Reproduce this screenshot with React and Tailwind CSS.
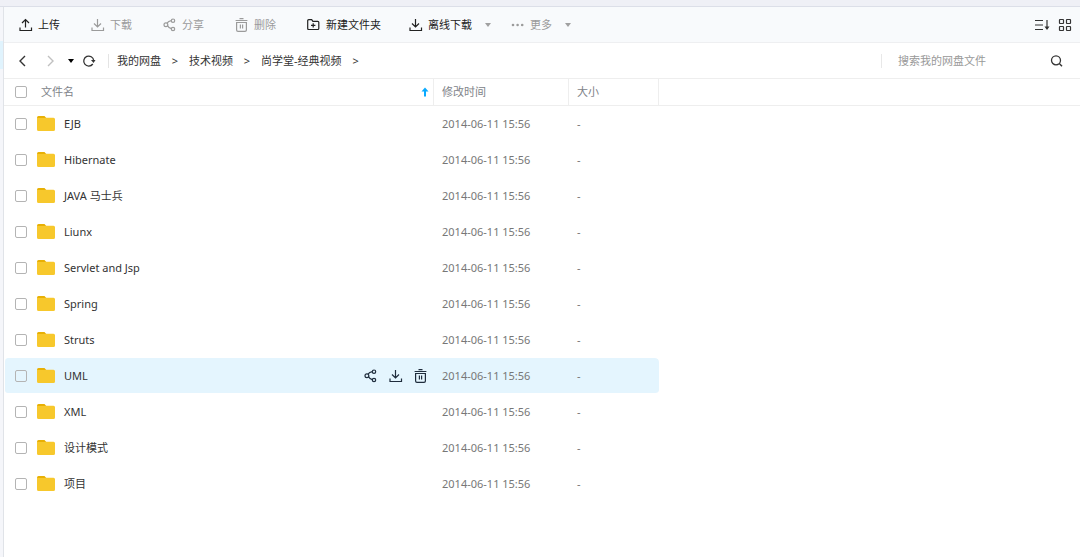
import React from "react";

const FOLDERS = [
  "EJB",
  "Hibernate",
  "JAVA 马士兵",
  "Liunx",
  "Servlet and Jsp",
  "Spring",
  "Struts",
  "UML",
  "XML",
  "设计模式",
  "项目",
];
const ACTIVE = "UML";
const MODIFIED = "2014-06-11 15:56";

function Icon({ children, className = "size-3.5" }) {
  return (
    <svg
      viewBox="0 0 14 14"
      fill="none"
      stroke="currentColor"
      strokeWidth="1.2"
      className={`shrink-0 ${className}`}
      aria-hidden="true"
    >
      {children}
    </svg>
  );
}

const UploadIcon = () => (
  <Icon>
    <path d="M6.5 9.5V2M3 5l3.5-3.5L10 5M1 9.5v3h11.5v-3" />
  </Icon>
);

const DownloadIcon = () => (
  <Icon>
    <path d="M6.5 1v8M3 5.5L6.5 9 10 5.5M1 9.5v3h11.5v-3" />
  </Icon>
);

const ShareIcon = () => (
  <Icon>
    <circle cx="2.9" cy="6.8" r="1.9" />
    <circle cx="10" cy="2.7" r="1.7" />
    <circle cx="10" cy="11" r="1.7" />
    <path d="M4 5.200Q5.400 3.100 8.300 2.700M4.600 7.700Q5.600 9.800 8.300 10.600" />
  </Icon>
);

const TrashIcon = () => (
  <Icon>
    <path d="M4.5 .6h4M.6 2.5h11.8M1.6 4.5h9.8v7.4q0 1.4-1.4 1.4H3q-1.4 0-1.4-1.4zM5.4 6.6v4M7.6 6.6v4" />
  </Icon>
);

const NewFolderIcon = () => (
  <Icon>
    <path d="M.7 2.7q0-1 1-1h3l1.2 1.6h4.9q1 0 1 1v6.2q0 1-1 1H1.7q-1 0-1-1zM6.2 5.2v4.4M4 7.4h4.4" />
  </Icon>
);

const MoreIcon = () => (
  <Icon>
    <g fill="currentColor" stroke="none">
      <circle cx="2" cy="7" r="1.3" />
      <circle cx="6.6" cy="7" r="1.3" />
      <circle cx="11.2" cy="7" r="1.3" />
    </g>
  </Icon>
);

const Caret = ({ className = "" }) => (
  <svg viewBox="0 0 6 4" className={`h-1 w-1.5 shrink-0 ${className}`} fill="currentColor" aria-hidden="true">
    <path d="M0 0h6L3 4z" />
  </svg>
);

const FolderIcon = () => (
  <svg viewBox="0 0 18 16" className="h-4 w-[18px] shrink-0" aria-hidden="true">
    <path d="M0 4V1.500Q0 0 1.500 0h6L9.300 2V4z" fill="#e8b004" />
    <path d="M0 2h8.300L9.500 1.700H16.500q1.500 0 1.500 1.500V13.500q0 1.500-1.500 1.500h-15Q0 15 0 13.500z" fill="#f7c82c" />
  </svg>
);

function ToolButton({ icon, children, muted, caret }) {
  return (
    <button
      type="button"
      className={`flex min-w-11 shrink-0 items-center gap-[5px] whitespace-nowrap ${muted ? "text-[#9b9b9b]" : "text-[#222222]"}`}
    >
      {icon}
      <span>{children}</span>
      {caret && <Caret className="ml-2 text-[#a0a0a0]" />}
    </button>
  );
}

function Check({ label }) {
  return (
    <input
      type="checkbox"
      aria-label={label}
      className="size-3 shrink-0 appearance-none rounded-[2px] border border-[#b4b4b4] checked:bg-[#09aaff]"
    />
  );
}

function Toolbar() {
  return (
    <div className="flex h-9 items-center border-b border-[#eeeff1] bg-[#f8fafc] pr-2 pl-[15px]">
      <div className="flex items-center gap-7">
        <ToolButton icon={<UploadIcon />}>上传</ToolButton>
        <ToolButton icon={<DownloadIcon />} muted>下载</ToolButton>
        <ToolButton icon={<ShareIcon />} muted>分享</ToolButton>
        <ToolButton icon={<TrashIcon />} muted>删除</ToolButton>
        <ToolButton icon={<NewFolderIcon />}>新建文件夹</ToolButton>
        <div className="flex gap-5">
          <ToolButton icon={<DownloadIcon />} caret>离线下载</ToolButton>
          <ToolButton icon={<MoreIcon />} muted caret>更多</ToolButton>
        </div>
      </div>
      <div className="ml-auto flex items-center gap-2 text-[#333333]">
        <button type="button" aria-label="排序">
          <svg viewBox="0 0 16 14" className="h-3.5 w-4" fill="none" stroke="currentColor" strokeWidth="1.2" aria-hidden="true">
            <path d="M1 2.500h8M1 7h8M1 11.500h8M13 2v9" />
            <path d="M10.500 8.500h5L13 12z" fill="currentColor" stroke="none" />
          </svg>
        </button>
        <button type="button" aria-label="网格视图">
          <Icon>
            <rect x="1.500" y="1.500" width="4" height="4" rx=".5" />
            <rect x="8.500" y="1.500" width="4" height="4" rx=".5" />
            <rect x="1.500" y="8.500" width="4" height="4" rx=".5" />
            <rect x="8.500" y="8.500" width="4" height="4" rx=".5" />
          </Icon>
        </button>
      </div>
    </div>
  );
}

function Navigation() {
  return (
    <div className="flex h-9 items-center border-b border-[#eeeeee] pr-4 pl-3">
      <button type="button" aria-label="后退" className="text-[#333333]">
        <Icon><path d="M9 2L4 7l5 5" strokeWidth="1.4" /></Icon>
      </button>
      <button type="button" aria-label="前进" className="ml-3.5 text-[#c0c0c0]">
        <Icon><path d="M4 2l5 5-5 5" strokeWidth="1.4" /></Icon>
      </button>
      <button type="button" aria-label="历史记录" className="ml-2.5 text-black">
        <Caret />
      </button>
      <button type="button" aria-label="刷新" className="ml-2 text-[#333333]">
        <Icon>
          <path d="M10.800 10A5 5 0 1 1 11.700 6.500" strokeWidth="1.300" />
          <path d="M9 6h4.500l-2 3z" fill="currentColor" stroke="none" />
        </Icon>
      </button>
      <nav aria-label="路径" className="ml-3 flex items-center whitespace-nowrap text-[#333333]">
        <span className="h-3.5 w-px bg-[#e4e4e4]" />
        <a href="#disk" className="ml-2">我的网盘</a>
        <span className="w-7 text-center">&gt;</span>
        <a href="#tech">技术视频</a>
        <span className="w-7 text-center">&gt;</span>
        <a href="#classic">尚学堂-经典视频</a>
        <span className="w-7 text-center">&gt;</span>
      </nav>
      <div className="ml-auto flex w-[183px] items-center border-l border-[#e8e8e8] pl-4">
        <input
          type="search"
          aria-label="搜索"
          placeholder="搜索我的网盘文件"
          className="h-3.5 min-w-0 flex-1 bg-transparent outline-none placeholder:text-[#999999]"
        />
        <button type="button" aria-label="搜索" className="text-[#333333]">
          <Icon>
            <circle cx="6" cy="6.300" r="4.500" strokeWidth="1.300" />
            <path d="M9.300 9.600l2.700 2.700" strokeWidth="1.400" />
          </Icon>
        </button>
      </div>
    </div>
  );
}

function FileRow({ name }) {
  const active = name === ACTIVE;
  const fill = active ? "bg-[#e4f5fe]" : "";
  return (
    <tr className="h-9">
      <td className={`rounded-l-sm border-b border-l border-transparent bg-clip-padding p-0 pl-2.5 ${fill}`}>
        <div className="flex items-center">
          <Check label={name} />
          <span className="ml-2.5 flex"><FolderIcon /></span>
          <span className="ml-[9px] text-[#333333]">{name}</span>
          {active && (
            <span className="mr-1.5 ml-auto flex gap-[11px] text-[#1f2d3d]">
              <button type="button" aria-label="分享"><ShareIcon /></button>
              <button type="button" aria-label="下载"><DownloadIcon /></button>
              <button type="button" aria-label="删除"><TrashIcon /></button>
            </span>
          )}
        </div>
      </td>
      <td className={`border-b border-transparent bg-clip-padding p-0 pl-2 text-[#777777] ${fill}`}>{MODIFIED}</td>
      <td className={`rounded-r-sm border-b border-transparent bg-clip-padding p-0 pl-2 text-[#777777] ${fill}`}>-</td>
      <td className="p-0" />
    </tr>
  );
}

function FileTable() {
  return (
    <table className="w-full table-fixed border-separate border-spacing-0 text-left">
      <colgroup>
        <col className="w-[430px]" />
        <col className="w-[135px]" />
        <col className="w-[90px]" />
        <col />
      </colgroup>
      <thead>
        <tr className="h-[27px] text-[#808389]">
          <th className="border-r border-b border-[#eeeeee] p-0 pl-[11px] font-normal">
            <div className="flex items-center">
              <Check label="全选" />
              <span className="ml-3.5">文件名</span>
              <svg viewBox="0 0 8 10" className="mr-1 ml-auto h-2.5 w-2" fill="#09aaff" aria-hidden="true">
                <path d="M4 .5L7.500 4.500H5V9.500H3V4.500H.5z" />
              </svg>
            </div>
          </th>
          <th className="border-r border-b border-[#eeeeee] p-0 pl-2 font-normal">修改时间</th>
          <th className="border-r border-b border-[#eeeeee] p-0 pl-2 font-normal">大小</th>
          <td className="border-b border-[#eeeeee] p-0" />
        </tr>
      </thead>
      <tbody>
        {FOLDERS.map((name) => (
          <FileRow key={name} name={name} />
        ))}
      </tbody>
    </table>
  );
}

export default function App() {
  return (
    <div className="flex min-h-screen flex-col bg-white font-['Noto_Sans','Noto_Sans_CJK_SC',sans-serif] text-[11px] leading-4">
      <div className="h-[7px] border-b border-[#dcdfe8] bg-[#eff0f6]" />
      <div className="flex flex-1">
        <aside className="w-1 shrink-0 border-r border-[#e0e3e8] bg-[#f5f6fa] pt-[34px]">
          <div className="h-7 bg-[#e0f3fd]" />
        </aside>
        <main className="min-w-0 flex-1">
          <Toolbar />
          <Navigation />
          <FileTable />
        </main>
      </div>
    </div>
  );
}
